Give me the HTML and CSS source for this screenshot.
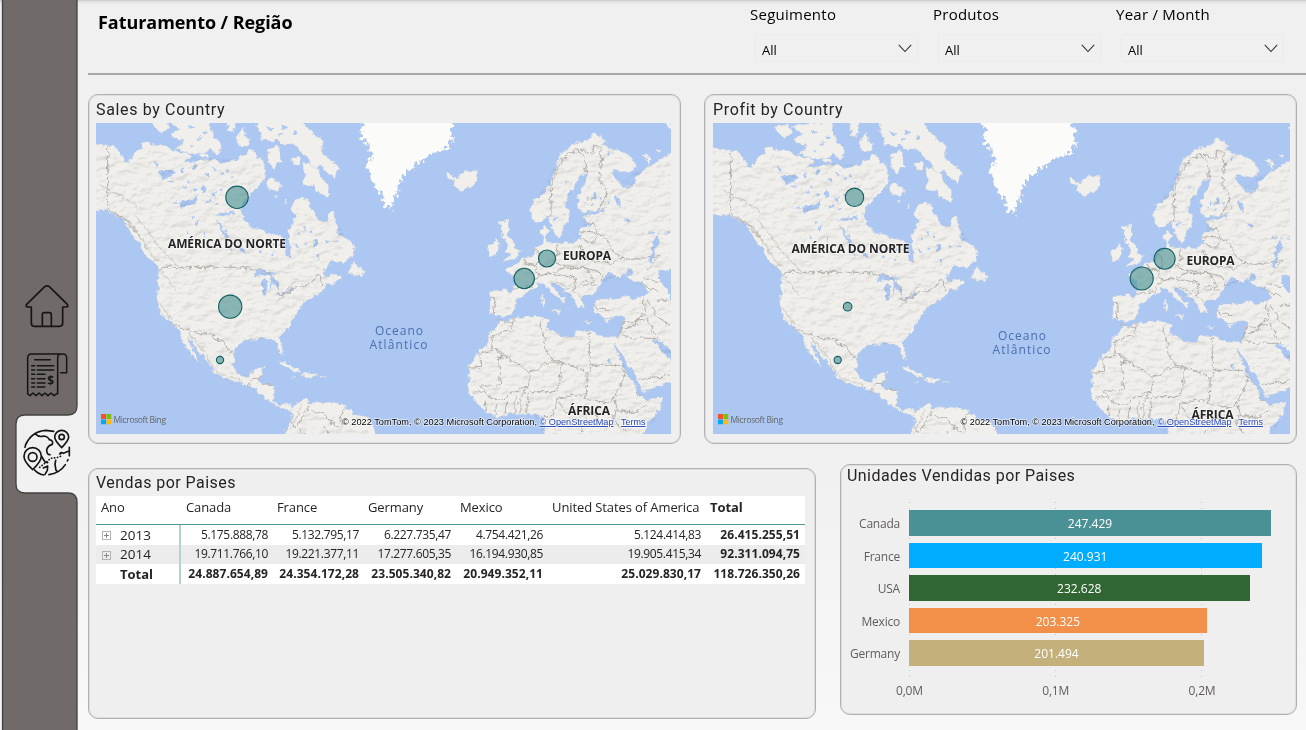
FILE: index.html
```html
<!DOCTYPE html>
<html lang="pt-BR">
<head>
<meta charset="utf-8">
<title>Faturamento / Região</title>
<link rel="stylesheet" href="styles.css">
</head>
<body>
<svg class="defs" width="0" height="0" aria-hidden="true">
  <defs>
    <filter id="rough" x="0" y="60" width="1850" height="1040" filterUnits="userSpaceOnUse" color-interpolation-filters="sRGB">
      <feTurbulence type="fractalNoise" baseFrequency="0.06" numOctaves="3" seed="8" result="n"/>
      <feDisplacementMap in="SourceGraphic" in2="n" scale="20" xChannelSelector="R" yChannelSelector="G"/>
    </filter>
    <filter id="spiky" x="780" y="60" width="380" height="380" filterUnits="userSpaceOnUse" color-interpolation-filters="sRGB">
      <feTurbulence type="fractalNoise" baseFrequency="0.07" numOctaves="3" seed="4" result="n"/>
      <feDisplacementMap in="SourceGraphic" in2="n" scale="42" xChannelSelector="R" yChannelSelector="G"/>
    </filter>
    <filter id="relief" x="0" y="60" width="1850" height="1040" filterUnits="userSpaceOnUse" color-interpolation-filters="sRGB">
      <feTurbulence type="fractalNoise" baseFrequency="0.03 0.05" numOctaves="4" seed="3" result="n"/>
      <feDiffuseLighting in="n" surfaceScale="7" diffuseConstant="1.35" lighting-color="#f6f4f0" result="l"><feDistantLight azimuth="235" elevation="48"/></feDiffuseLighting>
      <feComposite in="l" in2="SourceAlpha" operator="in"/>
    </filter>
    <symbol id="world" viewBox="0 0 1800 1080" overflow="visible">
      <g filter="url(#rough)">
        <g class="land">
          <path d="M10 175L75 180 100 180 120 203 135 228 147 238 152 214 168 200 185 190 190 174 205 170 215 182 250 180 272 192 300 205 325 205 335 215 312 228 330 235 355 222 380 227 410 225 430 235 470 225 480 213 500 210 508 192 525 200 530 225 545 212 552 240 560 262 550 287 530 310 510 325 498 340 487 357 485 380 488 398 500 410 512 430 540 432 567 447 600 450 612 480 618 510 632 522 630 480 622 445 640 412 645 395 635 375 640 345 665 338 685 345 690 370 705 385 715 407 740 410 745 385 760 380 766 405 770 430 776 450 800 460 815 475 825 495 815 515 790 530 752 528 735 548 730 575 755 567 785 577 770 595 738 600 727 617 700 635 680 645 665 660 660 675 650 690 640 705 625 725 610 740 600 757 601 775 611 795 608 810 597 800 590 780 585 767 570 760 540 757 530 767 510 765 490 765 472 780 462 805 460 835 465 860 480 875 505 874 522 860 530 850 550 847 545 870 535 885 550 897 585 905 581 935 575 945 596 960 620 957 635 965 640 972 650 955 680 940 687 955 710 950 740 955 780 955 800 970 830 990 860 995 880 1015 890 1080 600 1080 625 1015 638 995 632 975 610 972 598 968 570 950 545 925 510 905 470 890 430 877 402 865 400 850 380 825 350 795 332 765 322 755 337 792 356 828 343 822 320 790 307 758 297 735 270 715 250 695 235 660 230 635 235 605 232 565 243 555 225 535 202 518 180 480 160 455 145 430 125 400 100 385 80 380 10 365Z"/>
          <path d="M212 108L262 104 264 128 240 146ZM268 110L390 90 395 140 406 158 428 182 415 205 388 196 360 210 335 207 290 194 310 168 282 158 270 144 300 134 285 122ZM435 100L470 95 460 145 440 130 446 114ZM478 145L490 124 500 158 514 178 488 188 468 172ZM530 95L655 90 690 140 724 160 728 205 778 246 762 280 722 244 696 243 680 212 660 200 640 170 612 182 598 168 575 168 540 164 536 130ZM565 190L597 182 602 228 580 256 563 228ZM560 285L575 278 608 300 592 318 565 314ZM637 220L658 216 660 236 642 242ZM668 232L712 246 722 272 745 300 746 335 712 322 700 300 672 302 676 268ZM358 205L380 205 385 218 365 217ZM583 330L596 332 590 340ZM612 345L624 346 618 354Z"/>
          <path d="M798 557L812 548 820 528 830 546 850 556 848 574 832 567 800 565ZM597 830L615 832 650 850 660 862 640 858 610 842ZM662 870L690 862 712 872 690 880ZM630 876L650 878 640 881ZM720 874L738 876 722 880ZM1385 628L1392 626 1392 670 1384 660ZM1418 678L1445 672 1440 688ZM1510 708L1540 710 1520 715ZM1572 705L1592 700 1580 714ZM1728 195L1742 190 1740 204ZM1755 114L1775 112 1775 134Z"/>
          <path d="M1100 262L1118 272 1130 282 1150 262 1185 256 1192 280 1180 302 1147 319 1120 305 1124 290 1102 276ZM1258 412L1284 404 1290 435 1280 450 1298 468 1306 488 1320 495 1312 518 1270 530 1290 510 1274 502 1285 480 1268 455ZM1226 482L1250 460 1259 475 1250 508 1224 513Z"/>
          <path d="M1830 170L1773 205 1750 217 1720 235 1700 247 1705 232 1688 210 1702 210 1712 225 1700 247 1670 275 1660 300 1635 307 1615 290 1595 267 1600 255 1645 265 1665 250 1665 230 1645 210 1620 195 1590 190 1570 180 1580 165 1565 155 1540 145 1520 165 1490 170 1470 185 1445 205 1435 225 1420 270 1410 300 1390 325 1355 350 1350 365 1358 400 1370 415 1405 392 1412 415 1420 440 1430 455 1445 450 1450 425 1465 405 1470 385 1455 365 1460 330 1480 310 1495 285 1500 270 1520 265 1520 290 1505 310 1495 335 1495 365 1505 385 1540 378 1580 370 1560 384 1512 395 1515 410 1540 418 1500 430 1500 455 1480 475 1435 475 1400 470 1398 450 1408 432 1390 425 1382 440 1390 460 1385 478 1370 490 1355 515 1330 520 1315 535 1300 545 1275 548 1280 560 1305 572 1302 610 1295 620 1260 615 1232 618 1230 640 1230 685 1265 697 1295 685 1307 665 1315 640 1340 627 1350 610 1370 605 1380 590 1400 605 1420 627 1445 645 1453 658 1455 645 1430 620 1412 597 1425 590 1445 610 1470 625 1485 645 1495 665 1512 672 1505 645 1512 630 1540 627 1555 612 1565 590 1580 565 1590 560 1612 580 1630 570 1652 548 1666 560 1640 575 1665 590 1690 600 1705 620 1670 645 1635 632 1600 642 1550 642 1540 665 1545 685 1580 697 1635 695 1630 715 1625 740 1615 757 1590 758 1550 750 1525 735 1490 737 1483 757 1455 757 1420 742 1400 730 1403 705 1390 695 1350 693 1300 700 1265 712 1245 730 1225 755 1225 775 1195 800 1175 830 1165 850 1170 880 1162 900 1168 925 1190 955 1220 985 1250 998 1300 985 1340 990 1365 985 1390 1000 1395 1020 1390 1090 1670 1090 1700 1020 1740 970 1750 935 1700 947 1675 925 1665 900 1635 862 1620 820 1602 775 1635 820 1665 870 1685 918 1720 910 1773 890 1830 870Z"/>
        </g>
        <g class="water">
          <path d="M235 262L262 255 290 262 272 275 250 285 240 275ZM298 350L340 340 350 330 355 345 330 360 300 366ZM338 235L350 240 346 255 336 248ZM368 300L378 305 372 325 365 315ZM400 390L425 385 450 380 470 385 430 392ZM410 405L425 420 430 440 418 425ZM425 430L448 455 440 462 428 445ZM360 400L350 425 345 418ZM520 565L545 550 568 560 590 568 565 570 545 572 525 577ZM546 585L560 580 562 610 555 637 546 625ZM568 572L590 585 598 610 588 605 580 595 575 610 570 590ZM588 632L615 620 645 606 640 614 610 630ZM470 478L490 490 500 505 482 495ZM640 480L655 475 650 487ZM700 465L712 462 708 482 700 490Z"/>
          <path d="M222 230l18 8-6 8ZM300 255l14-4-8 14ZM320 282l10 3-6 7ZM262 290l16-4 4 8ZM300 308l20-7 4 6ZM330 318l18-10 5 7ZM375 268l12-3 0 9ZM398 245l9 3-6 9ZM420 262l10-4-2 12ZM440 250l8 10-9 4ZM455 275l10-2-4 10ZM395 330l14-5-5 10ZM375 352l16-7-3 9ZM270 355l16-5 3 6ZM412 350l8 8-8 4ZM420 310l9 5-8 7ZM335 390l12 5-10 8ZM320 435l8 10-8 4ZM372 442l7 14-8-2ZM448 480l9 10-9 2ZM520 468l10-3 2 7ZM545 470l9 4-8 5ZM575 478l9-3-3 9ZM670 425l8 5-7 6ZM690 440l8-5 2 9ZM665 480l12-4-2 8ZM735 465l12 0-6 8ZM760 470l9-4-2 10ZM655 440l7 7-7 3ZM710 505l7 0-3 25ZM540 500l8 4-8 3ZM572 505l7 3-7 4Z"/>
          <path d="M330 120l20 4-18 7ZM345 160l22-5-12 12ZM372 135l12 8-12 5ZM560 125l25 5-18 6ZM600 118l25 10-20 7ZM592 145l18 0-10 8ZM635 138l18 6-10 8ZM330 180l15 2-10 6Z"/>
          <g transform="translate(900 0)"><path d="M835 560L900 545 900 650 873 640 858 610 838 590ZM900 850L850 805 835 780 820 770 815 762 840 765 865 795 900 820ZM640 325L650 320 648 340 636 348ZM705 330L720 340 718 365 708 350ZM735 400L752 407 742 415ZM680 200L690 205 685 215ZM520 400L535 395 525 415ZM820 470L835 455 840 470 822 500 818 535 810 535ZM685 825L695 820 690 838ZM620 335l9 3-7 8ZM632 358l10-3-4 9ZM655 340l7-4-1 12ZM610 350l7 3-5 6ZM650 275l8 2-6 8ZM560 290l5 6-6 4ZM805 440l35 2-30 5ZM845 445l25-3 0 5ZM685 348l6 3-6 5Z"/></g>
        </g>
        <g class="borders">
          <path d="M83 180V375L105 385 130 395 150 425 172 440 182 460M243 547H485L520 555 555 553 590 590 598 632 655 606 690 597 712 570 725 570 725 600M270 716L330 737 370 747 395 745 410 765 430 770 445 795 462 803M505 905L520 880 540 880 540 870M545 897L585 903M690 960L670 990 660 1015 640 1025M700 980L730 985 745 1010 780 1025M800 970L780 1000 790 1025M735 1020L750 1070M630 1010L680 1055"/>
          <g transform="translate(900 0)"><path d="M512 395L515 310 530 250 560 210 590 195 612 215 620 265M600 195L640 205 640 180 660 185 665 215 660 280 680 330 655 375M612 410L640 420 655 445 600 440M600 460L640 475 655 445 680 460 690 490 720 515 700 535 620 525 600 480M530 475L535 505 520 530 545 540 620 550M470 490L475 530 460 545 430 530M402 610L450 605 475 570 470 545 425 525M475 570L530 560 560 545M500 560L530 575 560 570 590 585 560 610 530 585M590 585L580 620 600 635M560 550L620 550 640 590 600 585M600 600L650 600M620 550L660 560 665 590M332 640L345 640 340 685M350 705L400 715M330 755L395 735 400 700M337 760L335 795 300 805 302 847 265 850M337 785L450 865 515 825 495 790 490 750 480 710M355 815L370 815M337 785L370 815 355 815 362 900 300 905M450 870L445 905 400 920 370 940 340 945 295 900M515 830L545 835 540 885 530 920 450 920 440 905M515 825L540 830 560 835 618 860 620 925 530 940 545 965 560 985M628 740V860H618M628 841H720M620 925L615 940 690 955 705 935M720 845L735 865 720 900 700 940 710 975 760 985 800 960M765 920L790 935M705 975L700 1010 740 1040M560 985L600 975 640 985 655 1010M320 985L315 945M345 995L350 955M375 985L380 950M405 985V935M420 985V940M440 985L445 925M440 905L420 940M530 940L520 990 490 1000M280 925L310 920M600 1050L620 1000M715 755L730 715 800 700 830 760 770 760 725 750M725 725L760 725 780 695 800 680 790 640M790 600L835 620M800 645L840 700 873 725M780 885L830 875 868 873M873 640L830 650M690 490L720 520 780 525 840 510M840 510L800 560M835 590L790 580M640 665L680 675 690 680"/></g>
        </g>
        <path class="ridge" d="M95 378L150 415 182 455 205 500 240 530M160 385L200 430 230 475 290 540M240 650L255 680 275 705M325 745L360 785 390 825 400 845M405 860L440 872 480 885M60 300L120 330 170 365M245 565L270 590 290 620M650 580L620 625 590 650M1445 220L1425 280 1405 320M665 960L650 995 638 1015"/>
      </g>
      <path class="ice" filter="url(#spiky)" d="M826 90L846 118 841 155 863 175 876 215 861 240 871 265 881 290 898 322 910 350 932 376 944 340 959 290 973 267 1008 240 1043 213 1088 195 1113 170 1116 130 1108 80Z"/>
      <g class="shade" filter="url(#relief)">
        <path d="M10 180L100 190 150 240 200 190 300 215 480 225 540 220 548 280 480 350 484 400 510 437 600 460 620 525 640 450 650 350 700 400 765 400 810 480 720 560 770 580 660 670 595 755 470 770 455 860 520 875 540 900 400 850 330 750 250 690 240 560 180 460 100 380 10 360ZM650 970L850 1000 880 1080 610 1080ZM1360 360L1440 220 1560 160 1650 240 1590 240 1600 290 1820 200 1820 540 1730 560 1700 610 1640 580 1560 600 1500 650 1400 590 1300 610 1290 680 1240 690 1240 630 1310 610 1300 550 1400 480 1500 480 1515 380 1590 360 1500 370 1530 260 1480 280 1450 430 1400 400ZM1230 770L1250 720 1390 700 1410 740 1590 765 1690 940 1745 945 1700 1080 1400 1080 1360 980 1220 980 1170 900ZM1550 650L1770 640 1820 720 1820 870 1690 910 1610 770 1635 690 1550 680Z"/>
      </g>
    </symbol>
    <symbol id="mslogo" viewBox="0 0 10 10"><path fill="#f35325" d="M0 0h4.8v4.8H0z"/><path fill="#81bc06" d="M5.2 0H10v4.8H5.2z"/><path fill="#05a6f0" d="M0 5.2h4.8V10H0z"/><path fill="#ffba08" d="M5.2 5.2H10V10H5.2z"/></symbol>
  </defs>
</svg>
<div class="dashboard">
  <nav class="sidebar">
    <svg class="side-shape" width="80" height="730" viewBox="0 0 80 730"><path d="M2.5-2H77V406q0 9-9 9H25q-9 0-9 9v60q0 9 9 9H68q9 0 9 9V732H2.5Z"/></svg>
    <svg class="icon" width="44" height="46" viewBox="75 39 132 138"><path d="M94 108V157q0 9 9 9H179q9 0 9-9V108H199q7-1 3-8L148 47q-7-5-14 0L80 100q-4 7 3 8ZM127 166V131q0-6 6-6H148q6 0 6 6V166"/></svg>
    <svg class="icon receipt" width="44" height="48" viewBox="75 245 132 144"><path d="M83 371V263q0-12 12-12H188q12 0 12 12V307H182M173 370V263q0-12 11-12M83 371l7 5 9-8 9 8 9-8 9 8 9-8 9 8 9-8 9 8 9-7M104 268H151M95 286H104M112 286H161M95 299H104M112 299H161M95 312H104M112 312H135M95 325H104M112 325H135M95 338H104M112 338H135M95 350H104M112 350H135"/><text x="142" y="344">$</text></svg>
    <svg class="icon globe" width="50" height="50" viewBox="67 472 150 150"><path d="M77 527Q96 484 139 482L162 485M209 533V558M205 570 203 574M197 585Q180 611 148 615M132 616Q113 612 105 601M106 492Q118 504 132 499 146 501 149 510 162 512 158 524 145 527 141 540 141 555 151 555M76 533 77 530M125 559 136 577 144 579M131 595 144 589 143 602 136 614M168 572 166 584 169 602 173 605M180 553Q184 545 191 551L206 545"/><path class="dots" d="M120 593 139 578 153 566 171 564 183 560 184 547"/><path class="pin" d="M186 534Q165 512 165 502a21 20 0 0 1 42 0q0 10-21 32ZM99 600Q72 575 73 559a26 25 0 0 1 52 0q0 16-26 41Z"/><circle cx="186" cy="502" r="8"/><circle cx="99" cy="562" r="13"/></svg>
  </nav>
  <main>
    <header class="topbar">
      <h1>Faturamento / Região</h1>
      <div class="filters">
        <div class="filter"><label>Seguimento</label><div class="select"><span>All</span><svg width="14" height="9" viewBox="0 0 14 9"><path d="M.8.8 7 7.5 13.2.8"/></svg></div></div>
        <div class="filter"><label>Produtos</label><div class="select"><span>All</span><svg width="14" height="9" viewBox="0 0 14 9"><path d="M.8.8 7 7.5 13.2.8"/></svg></div></div>
        <div class="filter"><label>Year / Month</label><div class="select"><span>All</span><svg width="14" height="9" viewBox="0 0 14 9"><path d="M.8.8 7 7.5 13.2.8"/></svg></div></div>
      </div>
    </header>
    <section class="maps">
      <article class="card map-card">
        <h2>Sales by Country</h2>
        <svg class="map" width="575" height="311" viewBox="96 123 575 311">
          <use href="#world" x="80" y="85" width="600" height="360"/>
          <g class="place"><text x="168" y="248" textLength="118">AMÉRICA DO NORTE</text><text x="563" y="260" textLength="48">EUROPA</text><text x="568" y="414.500" textLength="42">ÁFRICA</text></g>
          <g class="ocean"><text x="375" y="335" textLength="48">Oceano</text><text x="369.500" y="348.500" textLength="58">Atlântico</text></g>
          <g class="bubbles"><circle cx="237" cy="197.300" r="11.200"/><circle cx="230.200" cy="306.700" r="11.600"/><circle cx="220" cy="360" r="3.600"/><circle cx="547" cy="258.500" r="8.500"/><circle cx="524.200" cy="278.500" r="10.200"/></g>
          <use href="#mslogo" x="101" y="414" width="10.500" height="10.500"/><text class="bing" x="113.500" y="422.500" textLength="52.500">Microsoft Bing</text>
          <g class="copy"><text x="342" y="425" textLength="195" lengthAdjust="spacingAndGlyphs">© 2022 TomTom, © 2023 Microsoft Corporation,</text><text class="link" x="539.500" y="425" textLength="74" lengthAdjust="spacingAndGlyphs">© OpenStreetMap</text><text class="link" x="621" y="425" textLength="24.500" lengthAdjust="spacingAndGlyphs">Terms</text></g>
        </svg>
      </article>
      <article class="card map-card second">
        <h2>Profit by Country</h2>
        <svg class="map" width="577" height="311" viewBox="713 123 577 311">
          <use href="#world" x="703" y="90" width="600" height="360"/>
          <g class="place"><text x="791.500" y="252.500" textLength="118">AMÉRICA DO NORTE</text><text x="1186.500" y="265" textLength="48">EUROPA</text><text x="1191.500" y="419" textLength="42">ÁFRICA</text></g>
          <g class="ocean"><text x="998" y="340" textLength="48">Oceano</text><text x="992.500" y="353.500" textLength="58">Atlântico</text></g>
          <g class="bubbles"><circle cx="854.500" cy="197.300" r="9.200"/><circle cx="847.600" cy="306.700" r="4.300"/><circle cx="837.700" cy="360" r="3.600"/><circle cx="1164.600" cy="258.700" r="10.500"/><circle cx="1141.700" cy="278.500" r="11.500"/></g>
          <use href="#mslogo" x="718" y="414" width="10.500" height="10.500"/><text class="bing" x="730.500" y="422.500" textLength="52.500">Microsoft Bing</text>
          <g class="copy"><text x="960.500" y="425" textLength="194" lengthAdjust="spacingAndGlyphs">© 2022 TomTom, © 2023 Microsoft Corporation,</text><text class="link" x="1157.500" y="425" textLength="74" lengthAdjust="spacingAndGlyphs">© OpenStreetMap</text><text class="link" x="1238.500" y="425" textLength="24.500" lengthAdjust="spacingAndGlyphs">Terms</text></g>
        </svg>
      </article>
    </section>
    <section class="bottom">
      <article class="card table-card">
        <h2>Vendas por Paises</h2>
        <table>
          <colgroup><col class="c0"><col class="c1"><col class="c2"><col class="c3"><col class="c4"><col class="c5"><col class="c6"></colgroup>
          <thead><tr><th>Ano</th><th>Canada</th><th>France</th><th>Germany</th><th>Mexico</th><th>United States of America</th><th class="strong">Total</th></tr></thead>
          <tbody>
            <tr><th><i class="plus"></i>2013</th><td>5.175.888,78</td><td>5.132.795,17</td><td>6.227.735,47</td><td>4.754.421,26</td><td>5.124.414,83</td><td class="strong">26.415.255,51</td></tr>
            <tr class="alt"><th><i class="plus"></i>2014</th><td>19.711.766,10</td><td>19.221.377,11</td><td>17.277.605,35</td><td>16.194.930,85</td><td>19.905.415,34</td><td class="strong">92.311.094,75</td></tr>
            <tr class="total"><th>Total</th><td>24.887.654,89</td><td>24.354.172,28</td><td>23.505.340,82</td><td>20.949.352,11</td><td>25.029.830,17</td><td>118.726.350,26</td></tr>
          </tbody>
        </table>
      </article>
      <article class="card chart-card">
        <h2>Unidades Vendidas por Paises</h2>
        <div class="chart">
          <div class="names"><span>Canada</span><span>France</span><span>USA</span><span>Mexico</span><span>Germany</span></div>
          <div class="plot">
            <div class="bar canada" style="width:362px">247.429</div>
            <div class="bar france" style="width:352.500px">240.931</div>
            <div class="bar usa" style="width:340.500px">232.628</div>
            <div class="bar mexico" style="width:297.700px">203.325</div>
            <div class="bar germany" style="width:295px">201.494</div>
          </div>
        </div>
        <div class="axis"><span>0,0M</span><span>0,1M</span><span>0,2M</span></div>
      </article>
    </section>
  </main>
</div>
</body>
</html>
```
FILE: styles.css
```css
* { box-sizing: border-box; }
body { margin: 0; font-family: "Open Sans", "Noto Sans", sans-serif; color: #252423; overflow: hidden; }
h1, h2 { margin: 0; }
.defs { position: absolute; }
.dashboard { display: flex; width: 1306px; height: 730px; background: linear-gradient(#c9c9c9 0, #e6e6e6 2px, #f0f0f0 5px, #f0f0f0 440px, #f8f8f8); }
.sidebar { position: relative; width: 80px; flex: none; display: flex; flex-direction: column; align-items: flex-start; padding: 284px 0 0 25px; }
.side-shape { position: absolute; left: 0; top: 0; }
.side-shape path { fill: #706a69; stroke: #434141; stroke-width: 1.3; }
.icon { position: relative; fill: none; stroke: #151515; stroke-width: 5; stroke-linejoin: round; stroke-linecap: round; }
.receipt { margin-top: 22px; stroke-width: 4.5; }
.icon text { font: bold 36px "Open Sans", sans-serif; fill: #151515; stroke: none; }
.globe { margin: 27px 0 0 -3px; }
.globe .dots { stroke-dasharray: 1 8; }
.globe .pin { fill: #f1f1f1; }

main { flex: 1; padding-left: 8px; min-width: 0; }
.topbar { display: flex; justify-content: space-between; height: 75px; border-bottom: 2px solid #aaa7a6; color: #000; }
h1 { padding: 10px 0 0 10px; font-size: 18px; line-height: 24px; letter-spacing: -.05px; }
.filters { display: flex; gap: 20px; padding: 3px 22px 0 0; }
.filter { width: 163px; }
.filter label { display: block; margin-left: -5px; font-size: 15px; line-height: 22px; letter-spacing: .25px; white-space: nowrap; }
.select { display: flex; justify-content: space-between; align-items: center; height: 28px; margin-top: 9px; padding: 3px 5px 0 6px; border: 1px solid #ebebeb; font-size: 13px; }
.select svg { margin-top: -2px; fill: none; stroke: #333; stroke-width: 1.1; }

.card { border: 1px solid #b0b0b0; border-radius: 10px; background: #efefef; box-shadow: inset 0 0 0 1px #dedede; }
h2 { font: 400 16px/20px Roboto, sans-serif; letter-spacing: .65px; white-space: nowrap; }
.maps { display: flex; gap: 23px; padding-top: 19px; }
.map-card { width: 593px; height: 350px; padding: 5px 0 0 7px; }
.map-card.second { padding-left: 8px; }
.map { display: block; margin-top: 3px; background: #abc7f2; }
.land { fill: #f0efec; stroke: #d3d6dc; stroke-width: 1.5; }
.ice { fill: #fbfbfa; stroke: #d8dce3; stroke-width: 2; }
.water { fill: #abc7f2; }
.borders { fill: none; stroke: #b5b1ad; stroke-width: 3; stroke-linejoin: round; }
.ridge { fill: none; stroke: #c9c7c2; stroke-width: 4; stroke-opacity: .75; }
.shade { opacity: .13; mix-blend-mode: multiply; }
.place { font: bold 12px "Open Sans", sans-serif; fill: #242424; stroke: #fff; stroke-width: 1.5; stroke-opacity: .6; paint-order: stroke; }
.ocean { font: 12px "Open Sans", sans-serif; fill: #4b6fae; }
.bubbles { fill: #4a9193; fill-opacity: .62; stroke: #116062; stroke-width: 1.1; }
.bing { font: 8.500px "Open Sans", sans-serif; fill: #666; }
.copy { font: 9.500px "Liberation Sans", sans-serif; fill: #000; stroke: #fff; stroke-width: 1.5; stroke-opacity: .65; paint-order: stroke; }
.copy .link { fill: #2345b5; text-decoration: underline; }

.bottom { display: flex; align-items: flex-start; gap: 24px; padding-top: 20px; }
.table-card { width: 728px; height: 251px; margin-top: 4px; padding: 4px 0 0 7px; }
.table-card h2 { letter-spacing: .45px; }
table { width: 709px; margin-top: 3px; border-spacing: 0; table-layout: fixed; background: #fff; }
.c0 { width: 85px; } .c1 { width: 91px; } .c2 { width: 91px; } .c3 { width: 92px; } .c4 { width: 92px; } .c5 { width: 158px; } .c6 { width: 100px; }
th, td { padding: 0 4px 0 0; white-space: nowrap; font-weight: 400; }
thead th { height: 29px; padding: 0 0 6px 5px; border-bottom: 1px solid #4a9a9d; text-align: left; font-size: 13px; line-height: 16px; letter-spacing: -.1px; }
tbody th { height: 19.500px; padding-left: 24px; border-right: 2px solid #b1d3d3; text-align: left; font-size: 13.500px; line-height: 16px; position: relative; }
tbody td { height: 19.500px; text-align: right; font-size: 12px; line-height: 16px; letter-spacing: -.35px; }
tbody td:last-child { padding-right: 5px; }
.alt { background: #ececec; }
.strong, .total td, .total th { font-weight: 700; }
.total th { font-size: 13px; }
td.strong, .total td { letter-spacing: .06px; }
.plus { position: absolute; left: 6px; top: 6px; width: 9px; height: 9px; border: 1px solid #b3b3b3; background: linear-gradient(#888, #888) center / 5px 1px no-repeat, linear-gradient(#888, #888) center / 1px 5px no-repeat; }

.chart-card { width: 457px; height: 251px; padding: 1px 0 0 6px; }
.chart-card h2 { letter-spacing: .45px; }
.chart { display: flex; margin-top: 16px; height: 178px; }
.names { width: 53px; padding: 7px 0 0; display: flex; flex-direction: column; align-items: flex-end; font-size: 12px; color: #605e5c; letter-spacing: -.22px; }
.names span { height: 32.500px; line-height: 30px; }
.plot { width: 380px; margin-left: 9px; padding-top: 8px; display: flex; flex-direction: column; gap: 7px; background: repeating-linear-gradient(#efefef00 0 1px, #efefef 1px 6px), linear-gradient(#c4c4c4, #c4c4c4) 0 0 / 1px 100% no-repeat, linear-gradient(#c4c4c4, #c4c4c4) 146px 0 / 1px 100% no-repeat, linear-gradient(#c4c4c4, #c4c4c4) 292px 0 / 1px 100% no-repeat; }
.bar { height: 25.500px; line-height: 27px; text-align: center; color: #fff; font-size: 12px; }
.canada { background: #4a9195; } .france { background: #00acff; } .usa { background: #306632; } .mexico { background: #f28f49; } .germany { background: #c4b07b; }
.axis { display: flex; padding: 2px 0 0 39px; font-size: 12px; line-height: 18px; color: #605e5c; letter-spacing: -.2px; }
.axis span { flex: none; width: 146.300px; padding-left: 10px; }
```
